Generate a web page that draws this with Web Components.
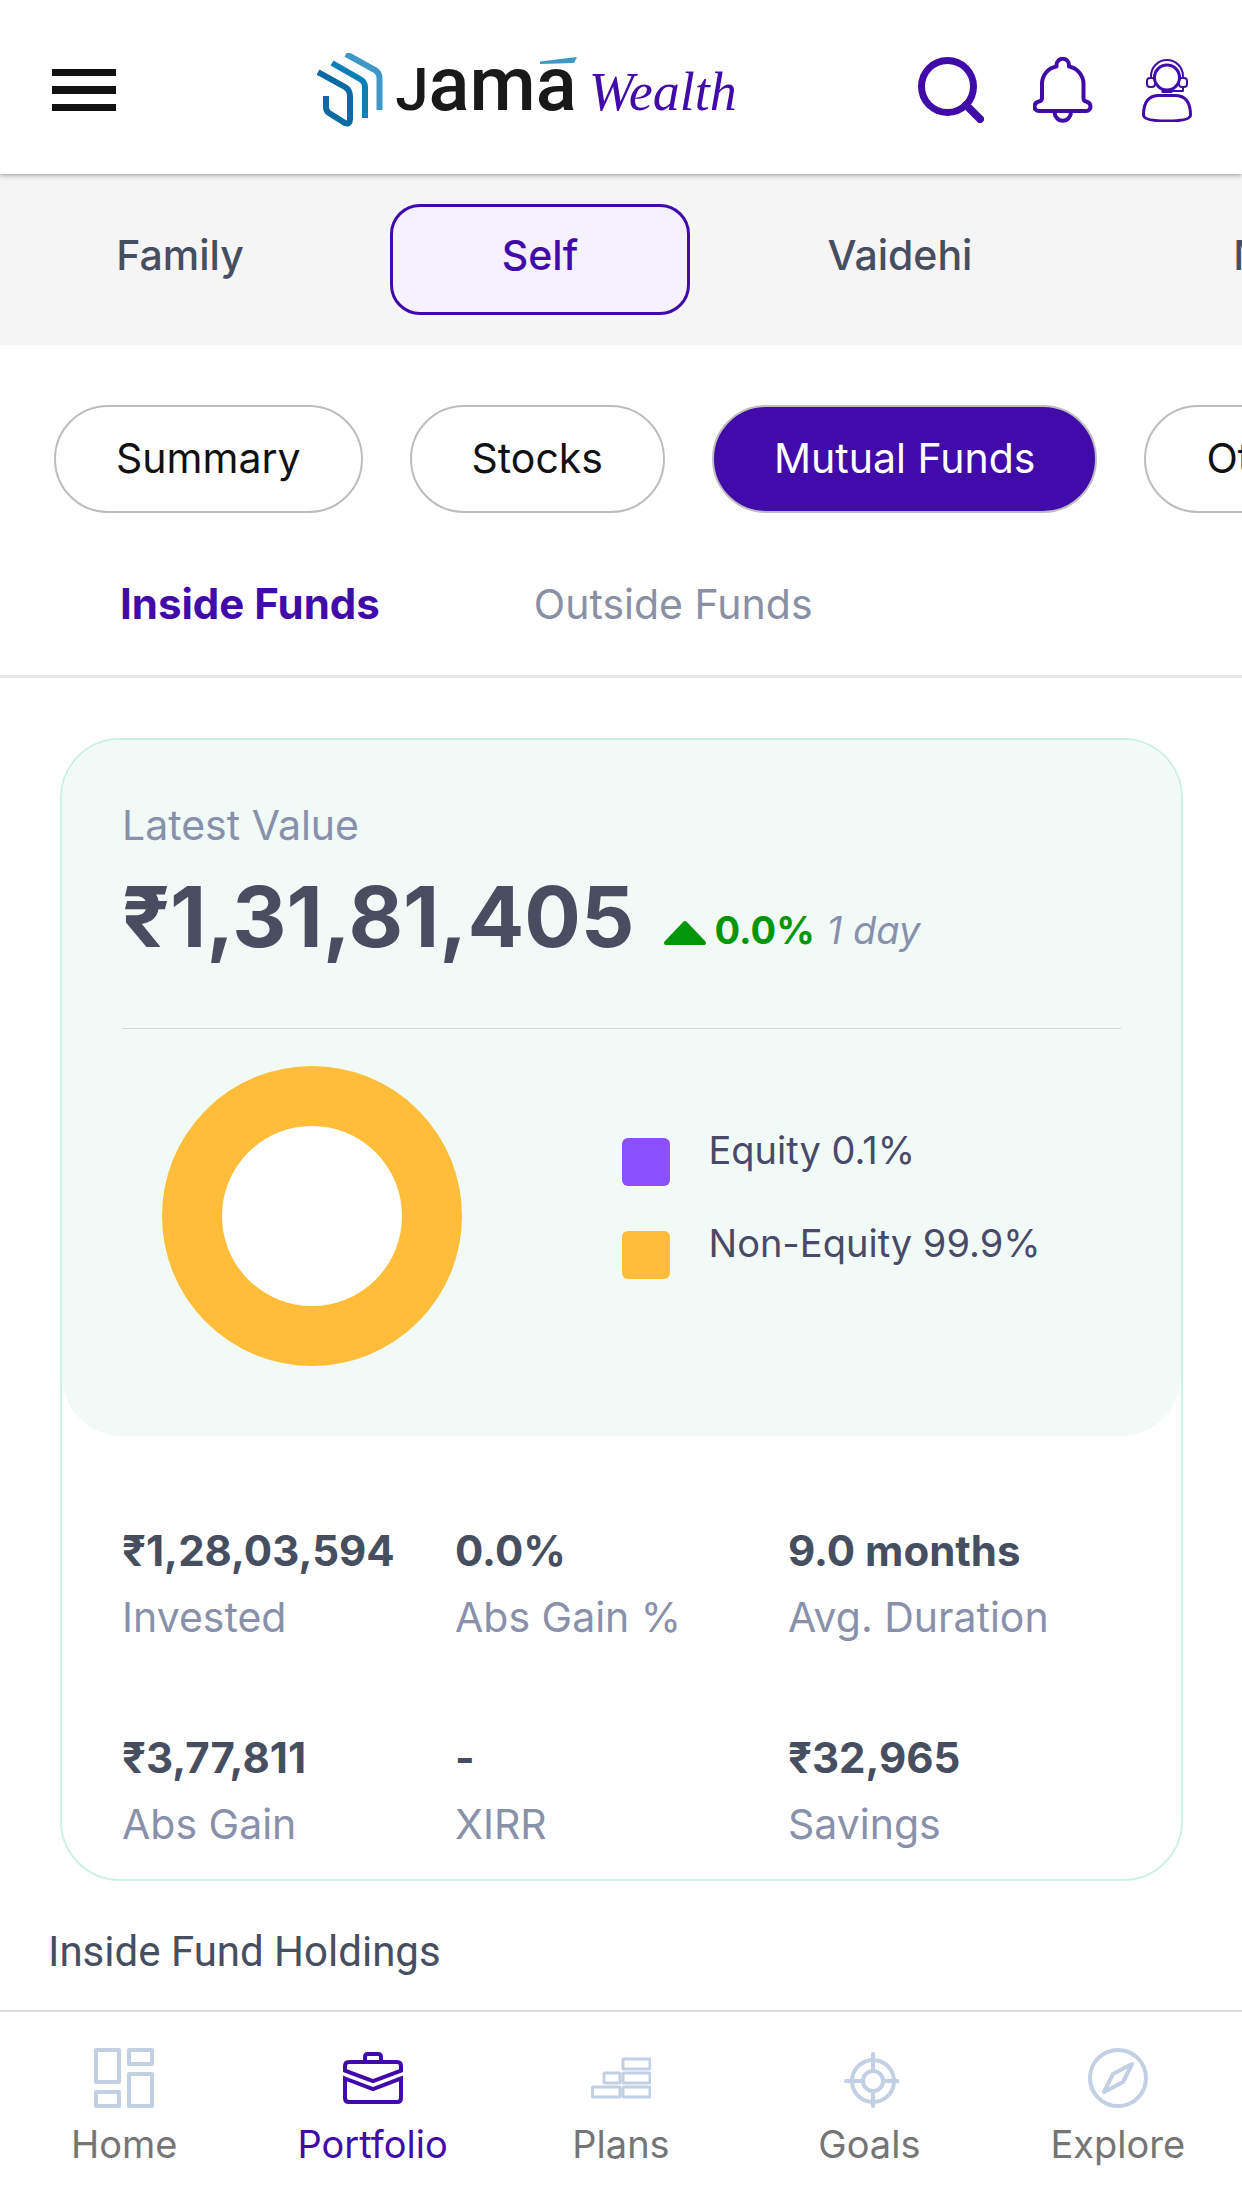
<!DOCTYPE html>
<html lang="en">
<head>
<meta charset="utf-8">
<meta name="viewport" content="width=device-width, initial-scale=1">
<title>Jama Wealth</title>
<style>
  body {
    margin: 0;
    background: #fff;
    font-family: Inter, "Noto Sans", sans-serif;
    font-size: 41px;
    line-height: 50px;
    color: #474e60;
    --brand: #410ba9;
    --muted: #8990aa;
  }
</style>
</head>
<body>
<wealth-app></wealth-app>

<script>
const makeTemplate = (html) => {
  const template = document.createElement('template')
  template.innerHTML = html
  return template
}

class BaseElement extends HTMLElement {
  constructor() {
    super()
    this._shadowRoot = this.attachShadow({ mode: 'open' })
    this._shadowRoot.appendChild(this.constructor.template.content.cloneNode(true))
  }
}

const icons = {
  menu: { w: 64, h: 42, body: '<path stroke="none" fill="currentColor" d="M0 0h64v7H0zM0 17h64v8H0zM0 35h64v7H0z"/>' },
  search: {
    w: 66,
    h: 66,
    body: '<circle cx="29.5" cy="29.5" r="26" stroke-width="7"/><path d="M48 48 62 62" stroke-width="8"/>',
  },
  bell: {
    w: 60,
    h: 66,
    body: `<g stroke-width="4"><path d="M6 54H53C59 54 59 46 53 44.500Q50.500 44 50.500 41V27C50.500 18 44 11 36 9.500V8A6 6 0 0 0 23.500 8V9.500C15 11 9 18 9 27V41Q9 44 6 44.500C0 46 0 54 6 54Z"/>
      <path d="M21.500 55A8 8.500 0 0 0 38 55"/></g>`,
  },
  support: {
    w: 50,
    h: 63,
    body: `<circle cx="25" cy="18.500" r="12.500" stroke-width="3"/>
      <g stroke-width="2"><path d="M9 18V17A16 16 0 0 1 41 17V18M41 28V32H30"/>
      <rect x="5" y="19" width="8" height="9" rx="3"/><rect x="37" y="19" width="8" height="9" rx="3"/>
      <rect x="20.500" y="31" width="9" height="2"/></g>
      <path stroke-width="3" d="M1.500 56C1.500 42 8 36.500 17 36.500H33C42 36.500 48.500 42 48.500 56Q48.500 62 25 62Q1.500 62 1.500 56Z"/>`,
  },
  home: {
    w: 60,
    h: 60,
    body: `<g stroke-width="4"><rect x="2" y="2" width="23" height="32"/><rect x="35" y="2" width="23" height="14"/>
      <rect x="35" y="26" width="23" height="32"/><rect x="2" y="44" width="23" height="14"/></g>`,
  },
  portfolio: {
    w: 60,
    h: 60,
    body: `<g stroke-width="4" stroke-linejoin="miter"><path d="M22 13V9Q22 6 25 6H35Q38 6 38 9V13"/>
      <path d="M2 22.500V18Q2 14 6 14H54Q58 14 58 18V22.500L30 33Z"/>
      <path d="M2 30.500 30 41 58 30.500V50Q58 54 54 54H6Q2 54 2 50Z"/></g>`,
  },
  plans: {
    w: 60,
    h: 60,
    body: `<g stroke-width="3"><rect x="32" y="11" width="27" height="10" rx="1"/><rect x="32" y="25" width="27" height="10" rx="1"/>
      <rect x="13" y="25" width="16" height="10" rx="1"/><rect x="32" y="39" width="27" height="10" rx="1"/>
      <rect x="1.500" y="39" width="27.500" height="10" rx="1"/></g>`,
  },
  goals: {
    w: 60,
    h: 60,
    body: `<g stroke-width="4"><circle cx="34" cy="33" r="21"/><circle cx="34" cy="33" r="10"/>
      <path d="M34 6V22M34 44V58M7 33H23M45 33H59"/></g>`,
  },
  explore: {
    w: 60,
    h: 60,
    body: '<circle cx="30" cy="30" r="28" stroke-width="4"/><path stroke-width="4" d="M44 16 25 26 16 44 35 34Z"/>',
  },
  up: { w: 44, h: 32, body: '<path fill="currentColor" stroke-width="4" d="M22 9 41 29H3Z"/>' },
}

class UiIcon extends HTMLElement {
  constructor() {
    super()
    this._shadowRoot = this.attachShadow({ mode: 'open' })
  }

  static get observedAttributes() {
    return ['name']
  }

  attributeChangedCallback(name, oldValue, newValue) {
    const { w, h, body } = icons[newValue]
    this._shadowRoot.innerHTML = `
      <style>
        :host { display: block; flex: none; }
        svg { display: block; }
      </style>
      <svg width="${w}" height="${h}" viewBox="0 0 ${w} ${h}" fill="none" stroke="currentColor"
        stroke-linecap="round" stroke-linejoin="round" aria-hidden="true">${body}</svg>`
  }
}

class BrandLogo extends BaseElement {
  static template = makeTemplate(`
    <style>
      :host { display: block; padding-left: 20px; }
      a {
        display: flex;
        align-items: flex-start;
        color: #191919;
        text-decoration: none;
      }
      svg { display: block; flex: none; }
      .name {
        position: relative;
        margin-left: 12px;
        font: 500 76px/62px Roboto, sans-serif;
      }
      .name span { font-size: 60px; }
      .accent { position: absolute; right: 0; top: 4px; }
      .script {
        margin-left: 12px;
        font: italic 54px/62px "Liberation Serif", serif;
        color: var(--brand);
      }
      .text { display: flex; align-items: baseline; }
    </style>
    <a href="#">
      <svg width="66" height="74" viewBox="0 0 66 74" fill="none" stroke-width="6" aria-hidden="true">
        <path stroke="#3f97c6" d="M29 1 58 17Q62.500 20 62.500 25V57"/>
        <path stroke="#0b80b8" d="M15 10 43 26Q48 29 48 34V65"/>
        <path stroke="#0a6ba3" d="M1 19 28 34Q33 37 33 43V66Q33 72 28 70L12 60Q9 58 9 54V43"/>
      </svg>
      <span class="text">
        <span class="name"><span>J</span>ama<svg class="accent" width="37" height="8" viewBox="0 0 37 8" aria-hidden="true"><path fill="#3f97c6" d="M0 4.500 37 0 34 6 0 7Z"/></svg></span>
        <span class="script">Wealth</span>
      </span>
    </a>
  `)
}

class AppHeader extends BaseElement {
  static template = makeTemplate(`
    <style>
      :host {
        box-sizing: border-box;
        height: 174px;
        padding: 6px 50px 0 52px;
        display: flex;
        align-items: center;
        justify-content: space-between;
        position: relative;
        background: #fff;
        box-shadow: 0 1px 5px rgba(0, 0, 0, 0.4);
      }
      button {
        padding: 0;
        border: 0;
        background: none;
        color: var(--brand);
      }
      .menu { color: #111; }
      .actions {
        display: flex;
        align-items: center;
        gap: 49px;
      }
    </style>
    <button class="menu" aria-label="Menu"><ui-icon name="menu"></ui-icon></button>
    <brand-logo></brand-logo>
    <div class="actions">
      <button aria-label="Search"><ui-icon name="search"></ui-icon></button>
      <button aria-label="Notifications"><ui-icon name="bell"></ui-icon></button>
      <button aria-label="Support"><ui-icon name="support"></ui-icon></button>
    </div>
  `)
}

class MemberTab extends BaseElement {
  static template = makeTemplate(`
    <style>
      :host { display: block; flex: 0 0 300px; }
      button {
        width: 100%;
        padding: 23px 10px 32px;
        border: 3px solid transparent;
        border-radius: 30px;
        background: none;
        font: inherit;
        font-weight: 500;
        color: inherit;
      }
      :host([active]) button {
        border-color: var(--brand);
        background: #f6f1ff;
        color: var(--brand);
      }
    </style>
    <button><slot></slot></button>
  `)
}

class MemberBar extends BaseElement {
  static template = makeTemplate(`
    <style>
      :host {
        display: flex;
        gap: 60px;
        padding: 30px;
        overflow: hidden;
        background: #f5f5f5;
      }
    </style>
    <slot></slot>
  `)
}

class AssetPill extends BaseElement {
  static template = makeTemplate(`
    <style>
      :host { display: block; flex: none; }
      button {
        padding: 26px 60px 28px;
        border: 2px solid #bdbdbd;
        border-radius: 54px;
        background: #fff;
        font: inherit;
        color: #111;
        white-space: nowrap;
      }
      :host([active]) button {
        background: var(--brand);
        color: #fff;
      }
    </style>
    <button><slot></slot></button>
  `)
}

class AssetBar extends BaseElement {
  static template = makeTemplate(`
    <style>
      :host {
        display: flex;
        gap: 47px;
        padding: 60px 54px 0;
        overflow: hidden;
      }
    </style>
    <slot></slot>
  `)
}

class FundTabs extends BaseElement {
  static template = makeTemplate(`
    <style>
      :host {
        display: flex;
        gap: 154px;
        padding: 66px 120px 46px;
        border-bottom: 3px solid #e4e5e5;
      }
      button {
        padding: 0;
        border: 0;
        background: none;
        font: inherit;
        color: #8990a3;
      }
      .active {
        font-size: 42px;
        font-weight: 700;
        color: var(--brand);
      }
    </style>
    <button class="active">Inside Funds</button>
    <button>Outside Funds</button>
  `)
}

class LegendItem extends BaseElement {
  static template = makeTemplate(`
    <style>
      :host {
        display: flex;
        gap: 39px;
        font-size: 38px;
        line-height: 46px;
        color: #4a4a68;
      }
      i {
        flex: none;
        width: 48px;
        height: 48px;
        margin-top: 11px;
        border-radius: 6px;
        background: var(--swatch);
      }
    </style>
    <i></i><span><slot></slot></span>
  `)
}

class ValueSummary extends BaseElement {
  static template = makeTemplate(`
    <style>
      :host {
        display: block;
        padding: 60px 60px 70px;
        border-radius: 60px;
        background: #f1faf7;
      }
      .label { color: var(--muted); }
      .value {
        display: flex;
        align-items: flex-end;
        margin-top: 19px;
        padding-bottom: 63px;
        border-bottom: 1px solid #d5d8d7;
      }
      strong {
        font-size: 84px;
        line-height: 96px;
        font-weight: 700;
        color: #484d60;
      }
      .change {
        display: flex;
        align-items: center;
        gap: 8px;
        margin: 0 0 12px 28px;
        font-size: 38px;
        line-height: 46px;
        font-weight: 700;
        color: #009606;
      }
      .change em {
        margin-left: 4px;
        font-weight: 400;
        color: var(--muted);
      }
      .split {
        display: grid;
        grid-template-columns: 1fr 1fr;
        padding-top: 37px;
      }
      .chart { padding-left: 40px; }
      .chart svg { display: block; }
      .legend {
        display: flex;
        flex-direction: column;
        gap: 34px;
        padding-top: 61px;
      }
    </style>
    <div class="label">Latest Value</div>
    <div class="value">
      <strong>₹1,31,81,405</strong>
      <span class="change"><ui-icon name="up"></ui-icon>0.0%<em>1 day</em></span>
    </div>
    <div class="split">
      <div class="chart">
        <svg width="300" height="300" viewBox="0 0 300 300" role="img" aria-label="Asset split">
          <circle cx="150" cy="150" r="120" fill="#fff" stroke="#ffbd39" stroke-width="60"/>
        </svg>
      </div>
      <div class="legend">
        <legend-item style="--swatch: #8a4fff">Equity 0.1%</legend-item>
        <legend-item style="--swatch: #ffbd39">Non-Equity 99.9%</legend-item>
      </div>
    </div>
  `)
}

class StatItem extends BaseElement {
  static template = makeTemplate(`
    <style>
      :host {
        display: flex;
        flex-direction: column;
        gap: 16px;
        white-space: nowrap;
      }
      strong {
        font-size: 42px;
        font-weight: 700;
      }
      span { color: var(--muted); }
    </style>
    <strong><slot name="value"></slot></strong>
    <span><slot></slot></span>
  `)
}

class PortfolioCard extends BaseElement {
  static template = makeTemplate(`
    <style>
      :host {
        display: block;
        margin: 60px 59px 0 60px;
        border: 2px solid #cdf1e5;
        border-radius: 60px;
      }
      .stats {
        display: grid;
        grid-template-columns: repeat(3, 1fr);
        row-gap: 91px;
        padding: 90px 60px 30px;
      }
    </style>
    <value-summary></value-summary>
    <div class="stats"><slot></slot></div>
  `)
}

class NavItem extends BaseElement {
  static template = makeTemplate(`
    <style>
      :host { display: block; flex: 1; }
      a {
        display: flex;
        flex-direction: column;
        align-items: center;
        gap: 13px;
        font-size: 38px;
        line-height: 46px;
        color: #757575;
        text-decoration: none;
      }
      ui-icon { color: #c3cfe2; }
      :host([active]) a, :host([active]) ui-icon { color: var(--brand); }
    </style>
    <a href="#"><ui-icon></ui-icon><span><slot></slot></span></a>
  `)

  static get observedAttributes() {
    return ['icon']
  }

  attributeChangedCallback(name, oldValue, newValue) {
    this._shadowRoot.querySelector('ui-icon').setAttribute('name', newValue)
  }
}

class BottomNav extends BaseElement {
  static template = makeTemplate(`
    <style>
      :host {
        display: flex;
        padding: 36px 0 41px;
        border-top: 2px solid #dcdcdc;
        background: #fff;
      }
    </style>
    <slot></slot>
  `)
}

class WealthApp extends BaseElement {
  static template = makeTemplate(`
    <style>
      :host {
        display: flex;
        flex-direction: column;
        min-height: 100vh;
      }
      main { flex: 1; }
      h2 {
        margin: 0;
        padding: 46px 48px 33px;
        font: 400 42px/50px Roboto, sans-serif;
      }
    </style>
    <app-header></app-header>
    <main>
      <member-bar>
        <member-tab>Family</member-tab>
        <member-tab active>Self</member-tab>
        <member-tab>Vaidehi</member-tab>
        <member-tab>Mr</member-tab>
      </member-bar>
      <asset-bar>
        <asset-pill>Summary</asset-pill>
        <asset-pill>Stocks</asset-pill>
        <asset-pill active>Mutual Funds</asset-pill>
        <asset-pill>Others</asset-pill>
      </asset-bar>
      <fund-tabs></fund-tabs>
      <portfolio-card>
        <stat-item><span slot="value">₹1,28,03,594</span>Invested</stat-item>
        <stat-item><span slot="value">0.0%</span>Abs Gain %</stat-item>
        <stat-item><span slot="value">9.0 months</span>Avg. Duration</stat-item>
        <stat-item><span slot="value">₹3,77,811</span>Abs Gain</stat-item>
        <stat-item><span slot="value">-</span>XIRR</stat-item>
        <stat-item><span slot="value">₹32,965</span>Savings</stat-item>
      </portfolio-card>
      <h2>Inside Fund Holdings</h2>
    </main>
    <bottom-nav>
      <nav-item icon="home">Home</nav-item>
      <nav-item icon="portfolio" active>Portfolio</nav-item>
      <nav-item icon="plans">Plans</nav-item>
      <nav-item icon="goals">Goals</nav-item>
      <nav-item icon="explore">Explore</nav-item>
    </bottom-nav>
  `)
}

customElements.define('ui-icon', UiIcon)
customElements.define('brand-logo', BrandLogo)
customElements.define('app-header', AppHeader)
customElements.define('member-tab', MemberTab)
customElements.define('member-bar', MemberBar)
customElements.define('asset-pill', AssetPill)
customElements.define('asset-bar', AssetBar)
customElements.define('fund-tabs', FundTabs)
customElements.define('legend-item', LegendItem)
customElements.define('value-summary', ValueSummary)
customElements.define('stat-item', StatItem)
customElements.define('portfolio-card', PortfolioCard)
customElements.define('nav-item', NavItem)
customElements.define('bottom-nav', BottomNav)
customElements.define('wealth-app', WealthApp)
</script>
</body>
</html>
